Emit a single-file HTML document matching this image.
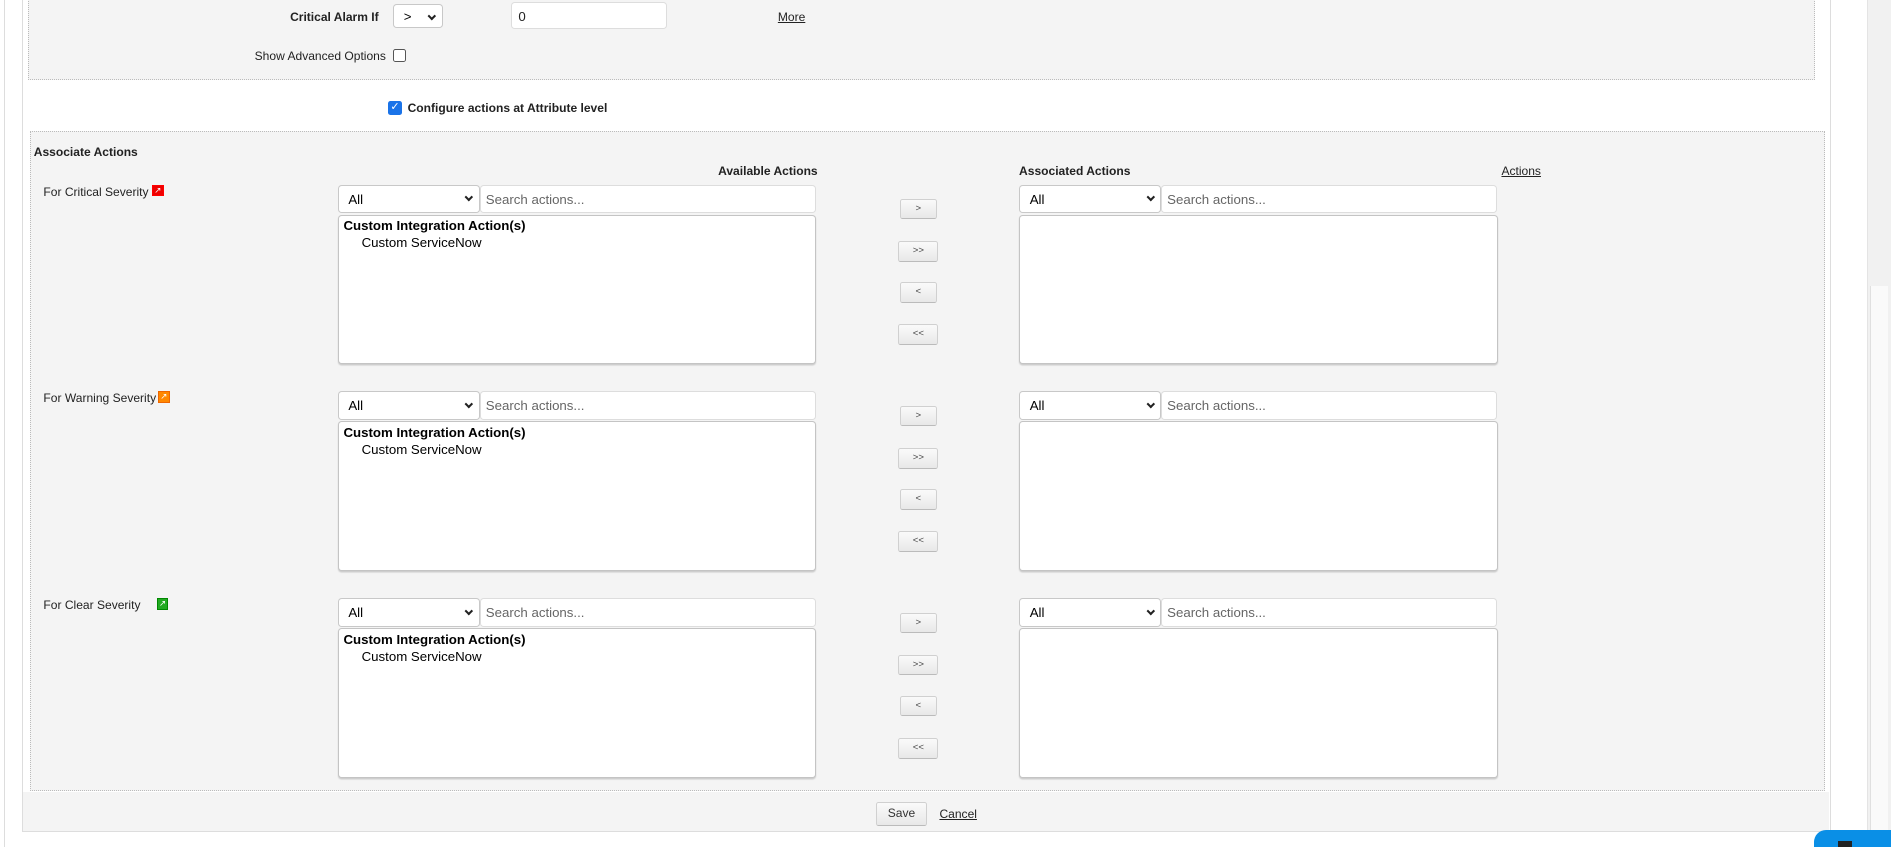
<!DOCTYPE html>
<html><head><meta charset="utf-8"><style>
html,body{margin:0;padding:0;background:#fff;overflow:hidden}
#w{position:relative;width:1568px;height:702px;zoom:1.20599;font-family:"Liberation Sans",Arial,sans-serif;font-size:10px;color:#222}
.a{position:absolute}
.b{font-weight:bold}
.sel{position:absolute;background:#fff;border:1px solid #c8c8c8;border-radius:3px;box-sizing:border-box;font-size:11px;padding:5px 0 0 8px;color:#000}
.sel:after{content:"";position:absolute;right:6px;top:7px;width:3px;height:3px;border-right:2px solid #222;border-bottom:2px solid #222;transform:rotate(45deg)}
.inp{position:absolute;background:#fff;border:1px solid #ddd;border-radius:3px;box-sizing:border-box;font-size:11px;padding:5px 0 0 4px;color:#666}
.box{position:absolute;background:#fff;border:1px solid #c4c4c4;border-radius:3px;box-sizing:border-box;box-shadow:0 1px 1px #ccc}
.btn{position:absolute;background:linear-gradient(#fafafa,#e8e8e8);border:1px solid #d0d0d0;border-bottom-color:#bbb;border-radius:2px;box-sizing:border-box;font-size:8px;color:#444;text-align:center;line-height:15px;height:17px}
.u{text-decoration:underline;position:absolute;color:#222}
.ic{position:absolute;width:8px;height:8px;border:1px solid;font-size:7px;line-height:8px;text-align:center;color:#fff}
</style></head><body><div id="w">
<div class="a" style="left:3px;top:0;width:1px;height:702px;background:#ddd"></div>
<div class="a" style="left:18px;top:0;width:1500px;height:690px;border-left:1px solid #ddd;border-right:1px solid #ddd;border-bottom:1px solid #ddd;box-sizing:border-box"></div>
<div class="a" style="left:23px;top:-1px;width:1482px;height:67px;background:#f4f4f4;border:1px dotted #bbb;box-sizing:border-box"></div>
<div class="a b" style="left:200px;width:114px;top:8px;text-align:right">Critical Alarm If</div>
<div class="sel" style="left:326px;top:3px;width:41px;height:20px;padding-top:4px">&gt;</div>
<div class="inp" style="left:424px;top:2px;width:129px;height:22px;color:#222;padding-left:5px">0</div>
<div class="u" style="left:645px;top:8px">More</div>
<div class="a" style="left:150px;width:170px;top:41px;text-align:right">Show Advanced Options</div>
<div class="a" style="left:326px;top:41px;width:9px;height:9px;border:1px solid #555;border-radius:2px;background:#fff"></div>
<div class="a" style="left:322px;top:84px;width:11px;height:11px;background:#1a73e8;border-radius:2px;color:#fff;font-size:9px;line-height:11px;text-align:center">✓</div>
<div class="a b" style="left:338px;top:84px">Configure actions at Attribute level</div>
<div class="a" style="left:25px;top:109px;width:1488px;height:547px;background:#f4f4f4;border:1px dotted #bbb;box-sizing:border-box"></div>
<div class="a b" style="left:28px;top:120px">Associate Actions</div>
<div class="a b" style="left:500px;width:178px;top:136px;text-align:right">Available Actions</div>
<div class="a b" style="left:845px;top:136px">Associated Actions</div>
<div class="u" style="left:1245px;top:136px">Actions</div>

<div id="rows"></div>
<script>
var rows=[["For Critical Severity",126,"#e00","#f00"],["For Warning Severity",131,"#f80","#e60"],["For Clear Severity",130,"#2a2","#080"]];
var h="";
rows.forEach(function(r,i){var o=i*171.5;
h+='<div class="a" style="left:36px;top:'+(153+o)+'px">'+r[0]+'</div>';
h+='<div class="ic" style="left:'+r[1]+'px;top:'+(153+o)+'px;background:'+r[2]+';border-color:'+r[3]+'">↗</div>';
h+='<div class="sel" style="left:280px;top:'+(153+o)+'px;width:118px;height:24px">All</div>';
h+='<div class="inp" style="left:398px;top:'+(153+o)+'px;width:279px;height:24px">Search actions...</div>';
h+='<div class="box" style="left:280px;top:'+(178+o)+'px;width:397px;height:124px"><div style="position:absolute;left:4px;top:2px;font-size:11px;font-weight:bold;color:#000">Custom Integration Action(s)</div><div style="position:absolute;left:19px;top:16px;font-size:11px;color:#000">Custom ServiceNow</div></div>';
h+='<div class="btn" style="left:746px;top:'+(165+o)+'px;width:31px">&gt;</div>';
h+='<div class="btn" style="left:745px;top:'+(200+o)+'px;width:33px">&gt;&gt;</div>';
h+='<div class="btn" style="left:746px;top:'+(234+o)+'px;width:31px">&lt;</div>';
h+='<div class="btn" style="left:745px;top:'+(269+o)+'px;width:33px">&lt;&lt;</div>';
h+='<div class="sel" style="left:845px;top:'+(153+o)+'px;width:118px;height:24px">All</div>';
h+='<div class="inp" style="left:963px;top:'+(153+o)+'px;width:278px;height:24px">Search actions...</div>';
h+='<div class="box" style="left:845px;top:'+(178+o)+'px;width:397px;height:124px"></div>';
});
document.getElementById("rows").innerHTML=h;
</script>
<div class="a" style="left:19px;top:657px;width:1498px;height:32px;background:#f4f4f4"></div>
<div class="btn" style="left:726px;top:665px;width:43px;height:20px;line-height:18px;font-size:10px;color:#333">Save</div>
<div class="u" style="left:779px;top:669px">Cancel</div>
<div class="a" style="left:1548px;top:0;width:20px;height:702px;background:#f1f1f1;border-left:1px solid #e4e4e4"></div>
<div class="a" style="left:1551px;top:237px;width:14px;height:465px;background:#fafafa;border-left:1px solid #e0e0e0"></div>
<div class="a" style="left:1504px;top:688px;width:64px;height:20px;background:#0a8fe6;border-radius:10px 0 0 0"></div>
<div class="a" style="left:1524px;top:697px;width:12px;height:6px;background:#222"></div>
</div></body></html>
